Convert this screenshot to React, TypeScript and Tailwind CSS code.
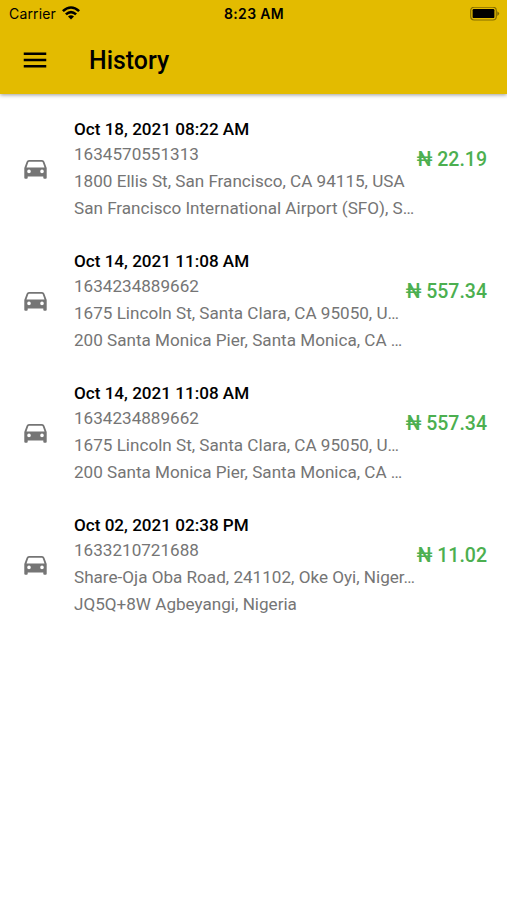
import { MdMenu } from "react-icons/md";

type Trip = { date: string; id: string; from: string; to: string; amount: string };

const trips: Trip[] = [
  { date: "Oct 18, 2021 08:22 AM", id: "1634570551313", from: "1800 Ellis St, San Francisco, CA 94115, USA", to: "San Francisco International Airport (SFO), S…", amount: "22.19" },
  { date: "Oct 14, 2021 11:08 AM", id: "1634234889662", from: "1675 Lincoln St, Santa Clara, CA 95050, U…", to: "200 Santa Monica Pier, Santa Monica, CA …", amount: "557.34" },
  { date: "Oct 14, 2021 11:08 AM", id: "1634234889662", from: "1675 Lincoln St, Santa Clara, CA 95050, U…", to: "200 Santa Monica Pier, Santa Monica, CA …", amount: "557.34" },
  { date: "Oct 02, 2021 02:38 PM", id: "1633210721688", from: "Share-Oja Oba Road, 241102, Oke Oyi, Niger…", to: "JQ5Q+8W Agbeyangi, Nigeria", amount: "11.02" },
];

function StatusBar() {
  return (
    <div className="grid h-7 grid-cols-3 items-center pr-[7px] pb-[1px] pl-[9px] font-['Inter',sans-serif] text-[14px]">
      <div className="flex items-center gap-[6px]">
        <span className="tracking-[0.15px]">Carrier</span>
        <svg className="-mt-[1px]" width="18" height="14" viewBox="0 0 18 14">
          <path d="M0 4.2 Q9 -3.8 18 4.2 L16.2 6.1 Q9 -0.6 1.8 6.1Z" />
          <path d="M3 7.4 Q9 2.2 15 7.4 L13.2 9.2 Q9 5.6 4.8 9.2Z" />
          <path d="M9 13.6 L6 10.5 Q9 8 12 10.5Z" />
        </svg>
      </div>
      <span className="-ml-[1px] text-center font-semibold tracking-[0.3px]">8:23 AM</span>
      <svg className="justify-self-end" width="30" height="14" viewBox="0 0 30 14">
        <rect x="0.7" y="0.2" width="25.6" height="12.8" rx="3.5" fill="none" stroke="black" strokeOpacity=".42" strokeWidth="1.2" />
        <rect x="2.6" y="2.1" width="21.8" height="9" rx="1.2" />
        <path d="M27.3 4.3 Q31 6.6 27.3 8.9Z" fillOpacity=".45" />
      </svg>
    </div>
  );
}

function CarIcon() {
  return (
    <svg className="mt-[53px] ml-1 h-[20px] w-[23px] shrink-0 fill-[#757575]" viewBox="0 0 23 20">
      <path
        fillRule="evenodd"
        d="M5 1H18Q19.8 1 20.4 2.7L22.7 9V18.7Q22.7 19.7 21.7 19.7H20.3Q19.3 19.7 19.3 18.7V17.4H3.7V18.7Q3.7 19.7 2.7 19.7H1.3Q.3 19.7 .3 18.7V9L2.6 2.7Q3.2 1 5 1ZM5.2 2.8Q4.5 2.8 4.2 3.5L2.5 8.6H20.5L18.8 3.5Q18.5 2.8 17.8 2.8ZM5 10.6A1.8 1.8 0 1 0 5 14.2A1.8 1.8 0 1 0 5 10.6ZM18 10.6A1.8 1.8 0 1 0 18 14.2A1.8 1.8 0 1 0 18 10.6Z"
      />
    </svg>
  );
}

function TripRow({ trip }: { trip: Trip }) {
  return (
    <li className="flex h-[132px] pr-5 pl-5">
      <CarIcon />
      <div className="ml-[27px] min-w-0 flex-1 pt-[10px] text-[17.1px] whitespace-nowrap text-[#757575]">
        <p className="h-[25px] leading-[27px] font-medium text-black">{trip.date}</p>
        <p className="h-[27px] leading-[26px]">{trip.id}</p>
        <p className="h-[27px] leading-[26px]">{trip.from}</p>
        <p className="h-[27px] leading-[26px]">{trip.to}</p>
      </div>
      <p className="mt-[41px] text-[19.5px] leading-[26px] font-medium whitespace-nowrap text-[#4caf50]">₦ {trip.amount}</p>
    </li>
  );
}

export default function App() {
  return (
    <div className="h-[900px] overflow-hidden bg-white font-['Roboto',sans-serif] text-black">
      <header className="h-[94px] bg-[#e3bb00] shadow-[0_1px_4px_rgba(0,0,0,0.4)]">
        <StatusBar />
        <div className="flex h-[64px] items-center pl-5">
          <MdMenu className="size-[30px]" />
          <h1 className="mt-[2px] ml-[39px] text-[24.9px] font-medium">History</h1>
        </div>
      </header>
      <ul className="pt-[12px]">
        {trips.map((trip, i) => <TripRow key={i} trip={trip} />)}
      </ul>
    </div>
  );
}
